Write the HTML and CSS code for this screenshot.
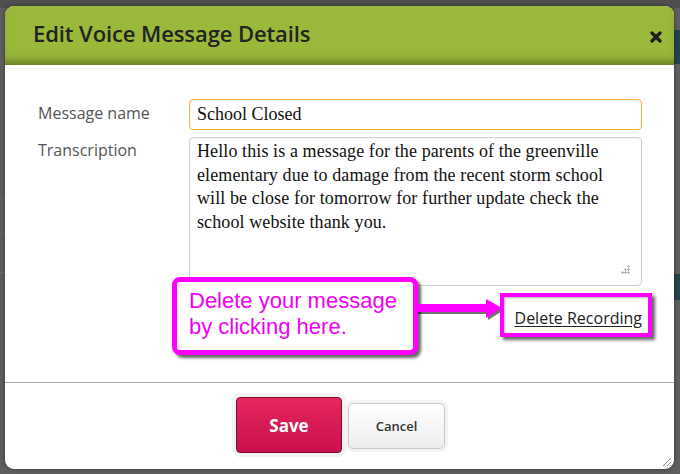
FILE: index.html
```html
<!DOCTYPE html>
<html lang="en">
<head>
<meta charset="utf-8">
<title>Edit Voice Message Details</title>
<link rel="stylesheet" href="styles.css">
</head>
<body>
<div class="page"></div>
<div class="modal">
  <div class="modal-header">
    <h1 class="modal-title">Edit Voice Message Details</h1>
    <button class="close" aria-label="Close">
      <svg width="12" height="12" viewBox="0 0 12 12"><path d="M2 2 L10 10 M10 2 L2 10" stroke="#1d1d1d" stroke-width="3.2" stroke-linecap="round"/></svg>
    </button>
  </div>
  <div class="modal-body">
    <div class="form-row">
      <label class="label" for="name">Message name</label>
      <input id="name" class="field" type="text" value="School Closed">
    </div>
    <div class="form-row">
      <label class="label" for="trans">Transcription</label>
      <div class="area-wrap">
        <textarea id="trans" class="area">Hello this is a message for the parents of the greenville elementary due to damage from the recent storm school will be close for tomorrow for further update check the school website thank you.</textarea>
        <span class="dots"></span>
      </div>
    </div>
    <div class="link-row">
      <a class="delete-link" href="#">Delete Recording</a>
    </div>
  </div>
  <div class="modal-footer">
    <button class="btn-save">Save</button>
    <button class="btn-cancel">Cancel</button>
  </div>
  <div class="callout">Delete your message by clicking here.</div>
  <svg class="arrow" width="90" height="26" viewBox="0 0 90 26">
    <g fill="#000" opacity="0.55" transform="translate(2,2)">
      <rect x="0" y="8" width="74" height="8"/>
      <polygon points="70,3 86,12 70,22"/>
    </g>
    <g fill="#ff00ff">
      <rect x="0" y="8" width="74" height="8"/>
      <polygon points="70,3 86,12 70,22"/>
    </g>
  </svg>
  <div class="highlight"></div>
  <svg class="grip" width="12" height="12" viewBox="0 0 12 12"><path d="M11 3 L3 11 M11 7 L7 11 M11 10 L10 11" stroke="#888" stroke-width="1"/></svg>
</div>
</body>
</html>
```

FILE: styles.css
```css
html, body {
  margin: 0;
  padding: 0;
}
body {
  width: 680px;
  height: 474px;
  overflow: hidden;
  position: relative;
  background: #575757;
  font-family: "Open Sans", "Liberation Sans", sans-serif;
}
.page {
  height: 474px;
  background:
    linear-gradient(#22444f, #22444f) 674px 30px / 6px 34px no-repeat,
    linear-gradient(#22444f, #22444f) 674px 274px / 6px 26px no-repeat,
    linear-gradient(#6a6a6a, #6a6a6a) 0 198px / 5px 1px no-repeat,
    linear-gradient(#6a6a6a, #6a6a6a) 0 233px / 5px 1px no-repeat,
    linear-gradient(#6a6a6a, #6a6a6a) 0 272px / 5px 1px no-repeat,
    linear-gradient(#5e5e5e, #5e5e5e) 0 8px / 680px 466px no-repeat,
    #4f4f4f;
}
.modal {
  position: absolute;
  left: 5px;
  top: 6px;
  width: 669px;
  height: 463px;
  background: #fff;
  border-radius: 9px;
  overflow: hidden;
  display: flex;
  flex-direction: column;
  box-shadow: 0 0 4px rgba(0,0,0,0.4);
}
.modal-header {
  height: 59px;
  flex: none;
  background: #9ab83a;
  box-shadow: inset 0 -9px 8px -5px rgba(40,50,10,0.45);
  display: flex;
  align-items: center;
  justify-content: space-between;
  padding: 0 12px 0 28px;
}
.modal-title {
  margin: -6px 0 0 0;
  font-size: 22px;
  font-weight: 600;
  color: #232323;
  letter-spacing: -0.1px;
}
.close {
  border: 0;
  background: none;
  padding: 0;
  width: 12px;
  height: 12px;
  margin-top: 2px;
  display: flex;
}
.modal-body {
  flex: 1;
  padding: 34px 32px 0 33px;
  display: flex;
  flex-direction: column;
  gap: 7px;
}
.form-row {
  display: grid;
  grid-template-columns: 151px 1fr;
  align-items: start;
}
.label {
  font-size: 16px;
  color: #555;
  padding-top: 3px;
}
.form-row + .form-row .label {
  padding-top: 2px;
}
.field {
  box-sizing: border-box;
  height: 31px;
  width: 100%;
  margin: 0;
  border: 1px solid #f6b13c;
  border-radius: 4px;
  padding: 0 7px;
  font-family: "Liberation Serif", serif;
  font-size: 18px;
  color: #111;
  box-shadow: inset 0 1px 3px rgba(0,0,0,0.08);
  outline: none;
}
.area-wrap {
  position: relative;
  height: 149px;
}
.area {
  box-sizing: border-box;
  display: block;
  width: 100%;
  height: 149px;
  margin: 0;
  border: 1px solid #cfcfcf;
  border-radius: 4px;
  padding: 2px 26px 0 7px;
  font-family: "Liberation Serif", serif;
  font-size: 18px;
  letter-spacing: 0.1px;
  line-height: 23.5px;
  color: #111;
  resize: none;
  outline: none;
  box-shadow: inset 0 1px 2px rgba(0,0,0,0.05);
}
.dots {
  position: absolute;
  right: 12px;
  bottom: 12px;
  width: 9px;
  height: 9px;
  background:
    radial-gradient(circle, #b5b5b5 1px, transparent 1.2px) 6px 0 / 3px 3px no-repeat,
    radial-gradient(circle, #b5b5b5 1px, transparent 1.2px) 3px 3px / 3px 3px no-repeat,
    radial-gradient(circle, #b5b5b5 1px, transparent 1.2px) 6px 3px / 3px 3px no-repeat,
    radial-gradient(circle, #b5b5b5 1px, transparent 1.2px) 0 6px / 3px 3px no-repeat,
    radial-gradient(circle, #b5b5b5 1px, transparent 1.2px) 3px 6px / 3px 3px no-repeat,
    radial-gradient(circle, #b5b5b5 1px, transparent 1.2px) 6px 6px / 3px 3px no-repeat;
}
.link-row {
  display: flex;
  justify-content: flex-end;
  margin-top: 14px;
}
.delete-link {
  font-size: 16px;
  color: #222;
  text-decoration: underline;
  text-underline-offset: 2px;
}
.modal-footer {
  height: 86px;
  flex: none;
  border-top: 1px solid #a9a9a9;
  display: flex;
  justify-content: center;
  align-items: center;
  gap: 6px;
  padding-left: 2px;
}
.btn-save {
  box-sizing: border-box;
  width: 106px;
  height: 56px;
  border: 1px solid #7d0f31;
  border-radius: 4px;
  background: linear-gradient(#e6265f, #c9104c);
  color: #fff;
  font-family: "Open Sans", "Liberation Sans", sans-serif;
  font-size: 17px;
  font-weight: 700;
  box-shadow: 0 0 0 4px #f2f2f2;
  margin-top: -2px;
}
.btn-cancel {
  box-sizing: border-box;
  width: 97px;
  height: 46px;
  border: 1px solid #c8c8c8;
  border-radius: 5px;
  background: linear-gradient(#ffffff, #ededed);
  color: #333;
  font-family: "Open Sans", "Liberation Sans", sans-serif;
  font-size: 13px;
  font-weight: 600;
  box-shadow: 0 0 0 3px #f3f3f3;
}
.callout {
  position: absolute;
  left: 167px;
  top: 271px;
  width: 246px;
  height: 78px;
  box-sizing: border-box;
  border: 5px solid #ff00ff;
  border-radius: 8px;
  background: #fff;
  box-shadow: 3px 3px 3px rgba(0,0,0,0.6);
  padding: 6px 6px 0 12px;
  font-family: "Liberation Sans", Arial, sans-serif;
  font-size: 22px;
  line-height: 26px;
  color: #f000f0;
}
.arrow {
  position: absolute;
  left: 411px;
  top: 290px;
}
.highlight {
  position: absolute;
  left: 495px;
  top: 287px;
  width: 152px;
  height: 44px;
  box-sizing: border-box;
  border: 4px solid #ff00ff;
  box-shadow: 3px 3px 3px rgba(0,0,0,0.6), inset 1px 1px 2px rgba(0,0,0,0.3);
}
.grip {
  position: absolute;
  right: 2px;
  bottom: 2px;
}
```
